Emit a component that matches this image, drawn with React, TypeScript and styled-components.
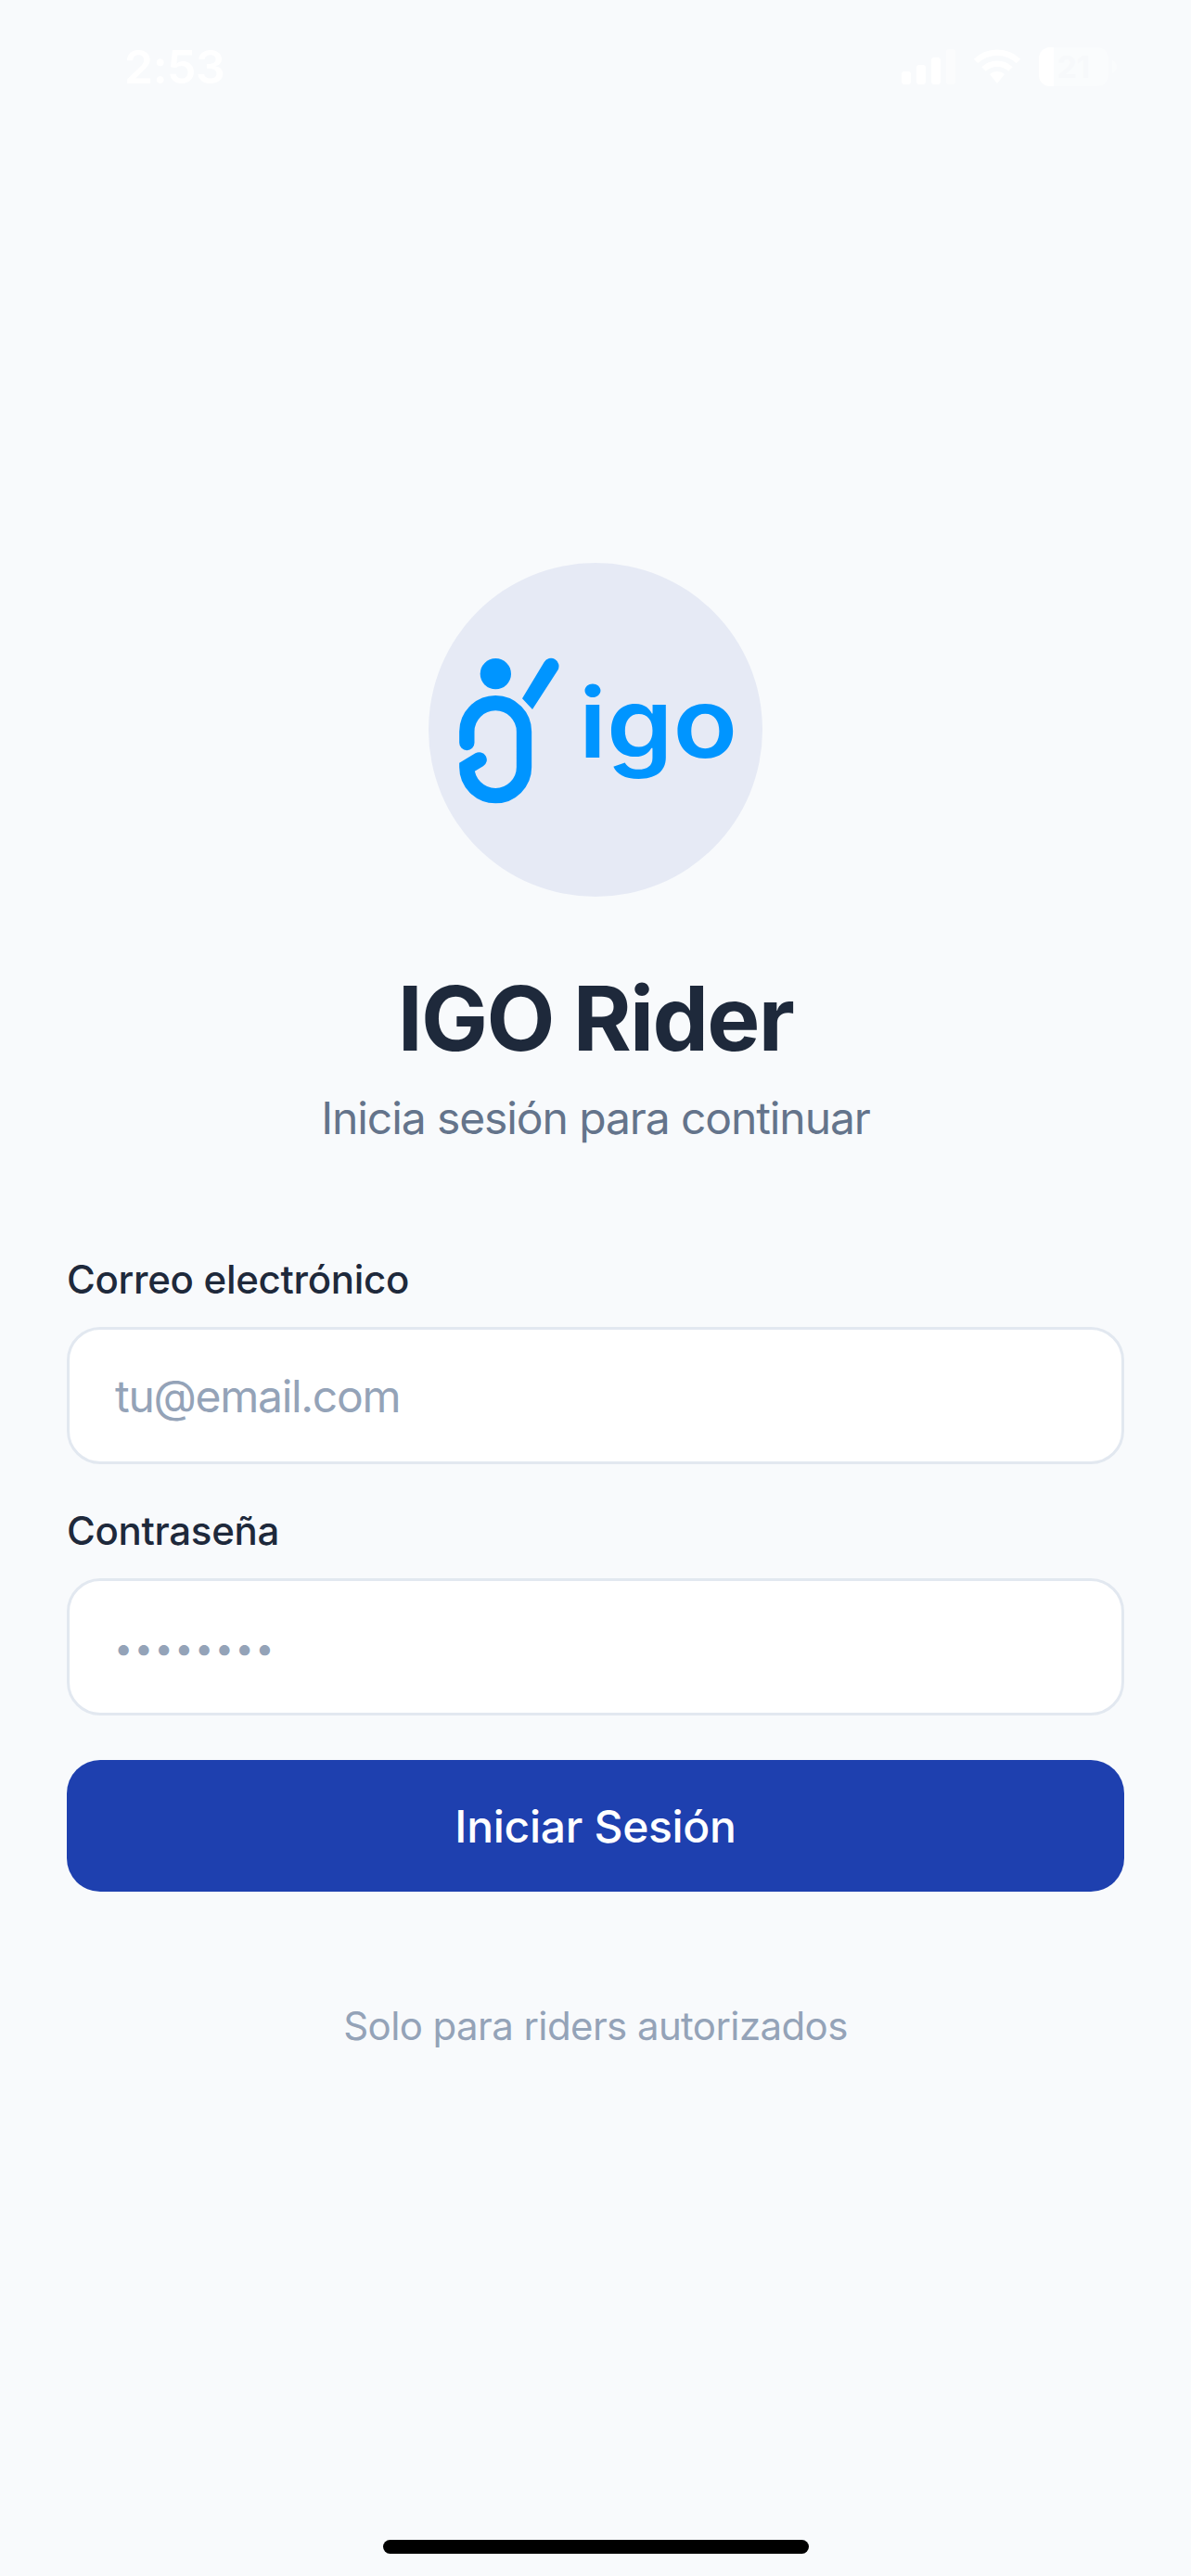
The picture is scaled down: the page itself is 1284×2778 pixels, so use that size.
import styled, { createGlobalStyle } from "styled-components";

const GlobalStyle = createGlobalStyle`
	html, body {
		margin: 0;
		padding: 0;
		background-color: #f8fafc;
	}
	* {
		box-sizing: border-box;
	}
`

const Page = styled.div`
	display: flex;
	flex-direction: column;
	width: 1284px;
	height: 2778px;
	overflow: hidden;
	background-color: #f8fafc;
	font-family: Inter, "Liberation Sans", sans-serif;
`

const StatusBar = styled.div`
	display: flex;
	justify-content: space-between;
	align-items: center;
	height: 144px;
	padding: 0 80px 0 134px;
`

const Time = styled.div`
	font-size: 50px;
	font-weight: 600;
	line-height: 1;
	letter-spacing: -0.5px;
	color: #ffffff;
`

const StatusIcons = styled.div`
	display: flex;
	align-items: center;
	gap: 19px;
`

const Main = styled.div`
	display: flex;
	flex-direction: column;
	flex: 1;
	padding: 463px 72px 0;
`

const Header = styled.div`
	display: flex;
	flex-direction: column;
	align-items: center;
`

const LogoCircle = styled.div`
	width: 360px;
	height: 360px;
	border-radius: 50%;
	background-color: #e6eaf5;
`

const Title = styled.h1`
	margin: 80px 0 0;
	font-size: 96px;
	line-height: 102px;
	font-weight: 700;
	letter-spacing: -1.7px;
	color: #1e293b;
`

const Subtitle = styled.p`
	margin: 29px 0 0;
	font-size: 48px;
	line-height: 56px;
	font-weight: 400;
	letter-spacing: -1.1px;
	color: #64748b;
`

const Form = styled.form`
	display: flex;
	flex-direction: column;
	margin-top: 116px;
`

const Label = styled.label`
	display: block;
	margin-bottom: 21px;
	font-size: 42px;
	line-height: 60px;
	font-weight: 500;
	letter-spacing: -0.3px;
	color: #1e293b;
`

const Field = styled.div`
	margin-bottom: 42px;
`

const Input = styled.input<{ $dots?: boolean }>`
	display: block;
	width: 100%;
	height: 148px;
	padding: ${({ $dots }) => ($dots ? "2px 48px 0" : "0 49px")};
	border: 3px solid #e2e8f0;
	border-radius: 36px;
	background-color: #ffffff;
	font-family: inherit;
	font-size: ${({ $dots }) => ($dots ? "36px" : "48px")};
	letter-spacing: ${({ $dots }) => ($dots ? "1.5px" : "-1.3px")};
	outline: none;

	&::placeholder {
		color: #94a3b8;
		opacity: 1;
	}
`

const SubmitButton = styled.button`
	height: 142px;
	margin-top: 6px;
	border: none;
	border-radius: 36px;
	background-color: #1e40af;
	color: #ffffff;
	font-family: inherit;
	font-size: 48px;
	font-weight: 500;
	letter-spacing: -0.3px;
`

const Footnote = styled.p`
	margin: 119px 0 0;
	text-align: center;
	font-size: 42px;
	line-height: 52px;
	letter-spacing: -0.6px;
	color: #94a3b8;
`

const HomeBar = styled.div`
	flex: none;
	align-self: center;
	width: 459px;
	height: 15px;
	margin-bottom: 24px;
	border-radius: 8px;
	background-color: #000000;
`

function SignalIcon()
{
	return (
		<svg width="58" height="38" viewBox="0 0 58 38">
			<rect x="0" y="24" width="10" height="14" rx="3" fill="#fff" />
			<rect x="16" y="17" width="10" height="21" rx="3" fill="#fff" />
			<rect x="32" y="9" width="10" height="29" rx="3" fill="#fff" />
			<rect x="48" y="0" width="10" height="38" rx="3" fill="#fff" fillOpacity="0.4" />
		</svg>
	)
}

function WifiIcon()
{
	return (
		<svg width="52" height="38" viewBox="0 0 52 38">
			<path d="M3 13 A33 33 0 0 1 49 13" fill="none" stroke="#fff" strokeWidth="6.5" />
			<path d="M11.5 21.5 A21 21 0 0 1 40.5 21.5" fill="none" stroke="#fff" strokeWidth="6.5" />
			<path d="M18 27 A12 12 0 0 1 34 27 L26 37 Z" fill="#fff" />
		</svg>
	)
}

function BatteryIcon()
{
	return (
		<svg width="84" height="42" viewBox="0 0 84 42">
			<rect x="0" y="0" width="75" height="42" rx="12" fill="#fff" fillOpacity="0.35" />
			<path d="M12 0 H16 V42 H12 A12 12 0 0 1 0 30 V12 A12 12 0 0 1 12 0 Z" fill="#fff" />
			<path d="M79 14 C82 15 84 18 84 21 C84 24 82 27 79 28 Z" fill="#fff" fillOpacity="0.35" />
			<text x="37.5" y="33" textAnchor="middle" fontFamily="Inter, sans-serif" fontSize="33" fontWeight="700" fill="#f7f9fb">21</text>
		</svg>
	)
}

function IgoLogo()
{
	return (
		<svg width="360" height="360" viewBox="66 51 1080 1080">
			<g fill="#0095ff">
				<circle cx="283" cy="410" r="50" />
				<path d="M369 490 L440 372 A24 24 0 0 1 484 398 L402 525 Z" />
				<text x="552" y="680" fontFamily="Inter, sans-serif" fontSize="315" fontWeight="600" textLength="513" lengthAdjust="spacingAndGlyphs">igo</text>
			</g>
			<path
				d="M190 633 V597 A92.5 92.5 0 0 1 375 597 V712 A92.5 92.5 0 0 1 190 712 L230 688"
				fill="none"
				stroke="#0095ff"
				strokeWidth="49"
				strokeLinecap="round"
			/>
		</svg>
	)
}

export default function App()
{
	return (
		<Page>
			<GlobalStyle />
			<StatusBar>
				<Time>2:53</Time>
				<StatusIcons>
					<SignalIcon />
					<WifiIcon />
					<BatteryIcon />
				</StatusIcons>
			</StatusBar>
			<Main>
				<Header>
					<LogoCircle>
						<IgoLogo />
					</LogoCircle>
					<Title>IGO Rider</Title>
					<Subtitle>Inicia sesión para continuar</Subtitle>
				</Header>
				<Form>
					<Field>
						<Label>Correo electrónico</Label>
						<Input placeholder="tu@email.com" />
					</Field>
					<Field>
						<Label>Contraseña</Label>
						<Input $dots placeholder="••••••••" />
					</Field>
					<SubmitButton type="button">Iniciar Sesión</SubmitButton>
				</Form>
				<Footnote>Solo para riders autorizados</Footnote>
			</Main>
			<HomeBar />
		</Page>
	)
}
